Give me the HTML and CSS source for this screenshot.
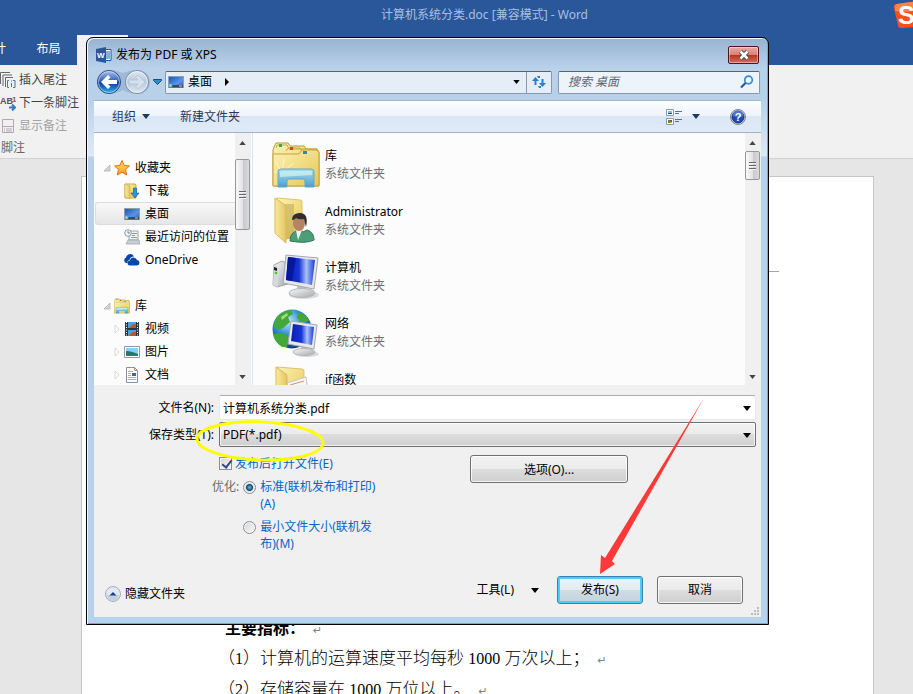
FILE: index.html
```html
<!DOCTYPE html>
<html lang="zh-CN">
<head>
    <meta charset="UTF-8">
    <meta name="viewport" content="width=device-width, initial-scale=1.0">
    <title>计算机系统分类.doc - Word</title>
    <link rel="stylesheet" href="styles.css">
</head>
<body>

    <!-- shared icons -->
    <svg class="defs" width="0" height="0" aria-hidden="true">
        <defs>
            <linearGradient id="gFolder" x1="0" y1="0" x2="1" y2="1">
                <stop offset="0" stop-color="#fdf3b4"/><stop offset="1" stop-color="#e6c653"/>
            </linearGradient>
            <linearGradient id="gFlap" x1="0" y1="0" x2="1" y2="0">
                <stop offset="0" stop-color="#fbeb9c"/><stop offset="1" stop-color="#e3c566"/>
            </linearGradient>
            <linearGradient id="gStand" x1="0" y1="0" x2="0" y2="1">
                <stop offset="0" stop-color="#a5dff0"/><stop offset="1" stop-color="#3f9bd6"/>
            </linearGradient>
            <linearGradient id="gScreen" x1="0" y1="0" x2="1" y2="0">
                <stop offset="0" stop-color="#0a1fb4"/><stop offset=".45" stop-color="#1533d6"/>
                <stop offset=".7" stop-color="#a9c1fa"/><stop offset="1" stop-color="#1b3cd2"/>
            </linearGradient>
            <linearGradient id="gMetal" x1="0" y1="0" x2="1" y2="1">
                <stop offset="0" stop-color="#fafafa"/><stop offset="1" stop-color="#a5a8ab"/>
            </linearGradient>
            <radialGradient id="gGlobe" cx=".4" cy=".3" r=".7">
                <stop offset="0" stop-color="#bfe8fb"/><stop offset=".5" stop-color="#2f8fd0"/><stop offset="1" stop-color="#0b3f83"/>
            </radialGradient>
            <linearGradient id="gBack" x1="0" y1="0" x2="0" y2="1">
                <stop offset="0" stop-color="#a9c4ec"/><stop offset=".48" stop-color="#2b5db8"/>
                <stop offset=".5" stop-color="#0c3292"/><stop offset="1" stop-color="#2fb6ee"/>
            </linearGradient>
            <linearGradient id="gForward" x1="0" y1="0" x2="0" y2="1">
                <stop offset="0" stop-color="#dfe8f1"/><stop offset=".5" stop-color="#b9cada"/><stop offset="1" stop-color="#dce8f3"/>
            </linearGradient>
            <linearGradient id="gStar" x1="0" y1="0" x2="0" y2="1">
                <stop offset="0" stop-color="#ffe36a"/><stop offset="1" stop-color="#f79a1e"/>
            </linearGradient>
            <linearGradient id="gDesk" x1="0" y1="0" x2="1" y2="1">
                <stop offset="0" stop-color="#1b4fae"/><stop offset=".6" stop-color="#5b95e2"/><stop offset="1" stop-color="#2459b5"/>
            </linearGradient>
        </defs>
        <symbol id="caret" viewBox="0 0 8 5"><path d="M0 0h8L4 5z" fill="currentColor"/></symbol>
        <symbol id="caret-up" viewBox="0 0 8 5"><path d="M0 5h8L4 0z" fill="currentColor"/></symbol>
        <symbol id="opened" viewBox="0 0 8 8"><path d="M7 1v6H1z" fill="#d5d5d5" stroke="#a9a9a9" stroke-width=".7"/></symbol>
        <symbol id="closed" viewBox="0 0 8 8"><path d="M2 0l4 4-4 4z" fill="#fff" stroke="#cfcfcf" stroke-width=".8"/></symbol>
        <symbol id="desktop" viewBox="0 0 16 14">
            <rect x=".5" y="1.5" width="15" height="11" fill="url(#gDesk)" stroke="#8fa0b5"/>
            <rect x="1" y="10" width="14" height="2.500" fill="#3a4754"/>
            <circle cx="2.500" cy="10.500" r="2" fill="#3fb6ea"/><circle cx="2.500" cy="10.500" r=".9" fill="#ffd640"/>
            <path d="M11 11h3" stroke="#c9d3dd"/>
        </symbol>
        <symbol id="library" viewBox="0 0 48 48">
            <path d="M2 6l2-4h12l2 3h14l2 3h11l2 3v34H1V9z" fill="url(#gFolder)" stroke="#b99635"/>
            <path d="M4 7l1-3h10l2 4h28v3M14 10l2-3h12l2 4" fill="none" stroke="#c9a947"/>
            <path d="M1 13h26l3-4h15l2 3v33H1z" fill="url(#gFolder)" stroke="#c4a342"/>
            <rect x="7" y="3" width="3" height="3" fill="#35a853"/><rect x="18" y="6" width="3" height="3" fill="#df4125"/><rect x="31" y="10" width="4" height="3" fill="#2f80d0"/>
            <path d="M10 31L3 20M10 31L2 31M10 31L12 18M10 31L22 22" stroke="#fff" stroke-opacity=".6"/>
            <path d="M6 46V31q0-3 3-3h30q3 0 3 3v15h-9v-6q0-2-2-2H17q-2 0-2 2v6z" fill="url(#gStand)" fill-opacity=".92" stroke="#5aa9d3"/>
            <path d="M8 36V31q0-1 2-1h28q2 0 2 1v3z" fill="#d2f3f7" fill-opacity=".7"/>
        </symbol>
    </svg>

    <header class="titlebar">
        <h1 class="doc-title">计算机系统分类.doc [兼容模式] - Word</h1>
        <nav class="tabs">
            <a class="tab" href="#">设计</a>
            <a class="tab" href="#">布局</a>
            <a class="tab active" href="#" aria-label="引用"></a>
        </nav>
        <svg class="ime" viewBox="0 0 28 28" aria-hidden="true">
            <path d="M1 7q-1-3 2-4L25 0q3 0 3 3v20q0 3-3 3l-17 1q-3 0-3-3z" fill="#fb4f1b"/>
            <path d="M2 7q-1-3 2-4L25 0v9Q12 12 2 10z" fill="#ff8246"/>
            <text x="5" y="23" class="ime-letter">S</text>
        </svg>
    </header>

    <section class="ribbon">
        <button class="ribbon-item" type="button">
            <svg width="16" height="16" viewBox="0 0 16 16" fill="none" stroke="#666">
                <path d="M.5 12V.5H10M3 14V3h9M5.500 15V5.500H13"/>
                <path d="M9 8.500H7.500v7H9M13 8.500h2v7h-2M11.500 11v4M11.500 8.500v1" stroke="#3b7abf"/>
            </svg>
            插入尾注
        </button>
        <button class="ribbon-item" type="button">
            <svg width="16" height="16" viewBox="0 0 16 16">
                <text x="0" y="9" class="ab">AB</text><text x="12" y="7" class="ab-one">1</text>
                <path d="M9 12.500h6M12 9.500l3 3-3 3" fill="none" stroke="#3b7abf" stroke-width="2"/>
            </svg>
            下一条脚注
        </button>
        <button class="ribbon-item" type="button" disabled>
            <svg width="16" height="16" viewBox="0 0 16 16" fill="none" stroke="#b1a9b4">
                <path d="M2.500 1.500h11v13h-11zM2.500 8.500h11M4 11h1M6 11h6M4 13h1M6 13h6"/>
            </svg>
            显示备注
        </button>
        <p class="ribbon-group">脚注</p>
    </section>

    <main class="workspace">
        <article class="page">
            <hr class="page-rule">
            <div class="page-text">
                <h2>主要指标：<span class="mark">↵</span></h2>
                <p>（<span class="num">1</span>）计算机的运算速度平均每秒 <span class="num">1000</span> 万次以上；<span class="mark">↵</span></p>
                <p>（<span class="num">2</span>）存储容量在 <span class="num">1000</span> 万位以上。<span class="mark">↵</span></p>
            </div>
        </article>
    </main>

    <section class="dialog" role="dialog" aria-labelledby="dialogTitle">
        <div class="dialog-title">
            <svg width="16" height="16" viewBox="0 0 16 16">
                <path d="M8 2.500h7v11H8z" fill="#fff" stroke="#2b579a"/>
                <path d="M10 5h4M10 7h4M10 9h4M10 11h4" stroke="#2b579a"/>
                <path d="M0 2l10-2v16L0 14z" fill="#2b579a"/>
                <text x="1" y="11" class="word-letter">W</text>
            </svg>
            <span id="dialogTitle">发布为 PDF 或 XPS</span>
            <button class="close" type="button" aria-label="关闭">
                <svg width="12" height="10" viewBox="0 0 12 10">
                    <path d="M2.500 1.500l7 7M9.500 1.500l-7 7" stroke="#4e4a58" stroke-width="4.500"/>
                    <path d="M2.500 1.500l7 7M9.500 1.500l-7 7" stroke="#fff" stroke-width="2.500"/>
                </svg>
            </button>
        </div>

        <div class="nav-row">
            <svg class="nav-arrows" width="56" height="26" viewBox="0 0 56 26" role="img" aria-label="后退 前进">
                <path d="M13 1q7 0 14 3 7-3 15-3a12 12 0 0 1 0 24q-8 0-15-4-7 4-14 4a12 12 0 0 1 0-24z" fill="#8da9c8" fill-opacity=".6"/>
                <circle cx="13" cy="13" r="11.500" fill="url(#gBack)" stroke="#344f80"/>
                <circle cx="13" cy="13" r="10.500" fill="none" stroke="#dbe8fa" stroke-opacity=".6"/>
                <path d="M5 13l7-7 2.500 2.500L12 11h9v4h-9l2.500 2.500L12 20z" fill="#fff"/>
                <circle cx="41" cy="13" r="11.500" fill="url(#gForward)" stroke="#758ca6"/>
                <circle cx="41" cy="13" r="10.500" fill="none" stroke="#fff" stroke-opacity=".6"/>
                <path d="M49 13l-7-7-2.500 2.500L42 11h-9v4h9l-2.500 2.500L42 20z" fill="#d4e0eb" stroke="#a8bacd" stroke-width=".6"/>
            </svg>
            <svg class="recent" width="9" height="6" viewBox="0 0 9 6"><path d="M.5.5h8v1l-4 4-4-4z" fill="#2b8fc9" stroke="#1b4b7c"/></svg>
            <div class="address">
                <svg width="16" height="14"><use href="#desktop"/></svg>
                <span>桌面</span>
                <svg class="crumb" width="4" height="8" viewBox="0 0 4 8"><path d="M0 0l4 4-4 4z"/></svg>
                <svg class="address-caret" width="7" height="4"><use href="#caret"/></svg>
                <button class="refresh" type="button" aria-label="刷新">
                    <svg width="14" height="14" viewBox="0 0 14 14" fill="#2a7fc9">
                        <path d="M0 6l3.500-4L7 6H4.500v4h-2V6z"/><path d="M5 1h3v2H6z"/>
                        <path d="M7 8h2.500V4h2v4H14l-3.500 4z"/><path d="M6 11h3v2H7z"/>
                    </svg>
                </button>
            </div>
            <div class="search">
                <input type="search" placeholder="搜索 桌面" aria-label="搜索 桌面">
                <svg width="14" height="14" viewBox="0 0 14 14" fill="none">
                    <circle cx="8.500" cy="5" r="3.800" stroke="#3a8bd0" stroke-width="1.700"/>
                    <path d="M5.500 8L1 12.500" stroke="#2559a5" stroke-width="2.200"/>
                </svg>
            </div>
        </div>

        <div class="toolbar">
            <button type="button">组织 <svg width="8" height="5"><use href="#caret"/></svg></button>
            <button type="button">新建文件夹</button>
            <button class="view" type="button" aria-label="更改视图">
                <svg width="16" height="16" viewBox="0 0 16 16">
                    <path d="M.5.5h7v6h-7zM.5 9.500h7v6h-7z" fill="#fff" stroke="#8e9aa8"/>
                    <path d="M2 2h4v3H2z" fill="#79bfe4"/><path d="M2 4h4v1H2z" fill="#174f63"/>
                    <path d="M2 11h2v3H2z" fill="#32a43c"/><path d="M4 11h2v2H4z" fill="#c32d69"/><path d="M4 13h2v1H4z" fill="#dfa622"/>
                    <path d="M9 2.500h7M9 4.500h4M9 10.500h7M9 12.500h4" stroke="#5b7188"/>
                </svg>
                <svg width="8" height="5"><use href="#caret"/></svg>
            </button>
            <button class="help" type="button" aria-label="帮助">
                <svg width="16" height="16" viewBox="0 0 16 16">
                    <circle cx="8" cy="8" r="7.500" fill="#d9dce2" stroke="#7a828f"/>
                    <circle cx="8" cy="8" r="6" fill="#2149b8" stroke="#183080"/>
                    <path d="M2.500 7a5.500 5.500 0 0 1 11 0q-5 2-11 0z" fill="#6d92e0" fill-opacity=".6"/>
                    <text x="8" y="12" text-anchor="middle" class="help-mark">?</text>
                </svg>
            </button>
        </div>

        <div class="browser">
            <ul class="tree">
                <li class="group">
                    <svg class="twisty" width="8" height="8"><use href="#opened"/></svg>
                    <svg width="16" height="16" viewBox="0 0 16 16"><path d="M8 .5l2.200 4.900 5.300.6-4 3.500 1.200 5.500L8 12.200 3.300 15l1.200-5.500-4-3.500 5.300-.6z" fill="url(#gStar)" stroke="#d9701a"/></svg>
                    收藏夹
                </li>
                <li>
                    <svg width="16" height="16" viewBox="0 0 16 16">
                        <path d="M1 1h10l1 1v13H1z" fill="url(#gFolder)" stroke="#cda83c"/><path d="M1 1l5 2v13l-5-2z" fill="url(#gFlap)" stroke="#cda83c" stroke-width=".6"/>
                        <path d="M9.500 5h3v5H15l-4 5-4-5h2.500z" fill="#2b96dc" stroke="#1467a9" stroke-width=".7"/>
                    </svg>
                    下载
                </li>
                <li class="selected"><svg width="16" height="14"><use href="#desktop"/></svg>桌面</li>
                <li>
                    <svg width="16" height="16" viewBox="0 0 16 16">
                        <path d="M5 2h9v9H5z" fill="#eef2f6" stroke="#9ba5ae"/><path d="M4 11h11l1 4H2z" fill="#c9ced3" stroke="#969fa8" stroke-width=".7"/>
                        <path d="M8 4.500h5M8 6.500h3M7 8.500h6" stroke="#6ea6d2"/><circle cx="4" cy="4" r="3.300" fill="#f6f8fa" stroke="#8e99a4"/><path d="M4 2v2h2" fill="none" stroke="#5e6973" stroke-width=".8"/>
                    </svg>
                    最近访问的位置
                </li>
                <li>
                    <svg width="16" height="16" viewBox="0 0 16 16">
                        <path d="M2 11a3 3 0 0 1 0-5.500Q3 2 6.500 2 9 2 10 4.500 6 4.500 5.500 8 3 8.500 3.500 11z" fill="#0a48a8"/>
                        <path d="M6 13.500a2.500 2.500 0 0 1 0-5Q6.500 5.500 9.500 5.500q2.500 0 3.500 2.500 2.500.3 2.500 2.800T13 13.500z" fill="#0a48a8"/>
                    </svg>
                    OneDrive
                </li>
                <li class="group spaced">
                    <svg class="twisty" width="8" height="8"><use href="#opened"/></svg>
                    <svg width="16" height="16"><use href="#library"/></svg>
                    库
                </li>
                <li>
                    <svg class="twisty" width="8" height="8"><use href="#closed"/></svg>
                    <svg width="16" height="16" viewBox="0 0 16 16">
                        <path d="M1 1h14v14H1z" fill="#27383e"/><path d="M4 1h8v6H4zM4 9h8v6H4z" fill="#4f9fd8"/><path d="M6 7q1-4 6-4v4zM5 15q3-5 7-4v4z" fill="#b65638"/>
                        <path d="M2.500 1v14M13.500 1v14" stroke="#fff" stroke-dasharray="1 1.500"/>
                    </svg>
                    视频
                </li>
                <li>
                    <svg class="twisty" width="8" height="8"><use href="#closed"/></svg>
                    <svg width="16" height="16" viewBox="0 0 16 16">
                        <path d="M.5 2.500h15v11H.5z" fill="#fff" stroke="#93999e"/><path d="M2 4h12v8H2z" fill="#86d0f1"/><path d="M2 7q5 0 12 3v2H2z" fill="#1f785e"/><path d="M2 10.500h12V12H2z" fill="#2577a8"/>
                    </svg>
                    图片
                </li>
                <li>
                    <svg class="twisty" width="8" height="8"><use href="#closed"/></svg>
                    <svg width="16" height="16" viewBox="0 0 16 16">
                        <path d="M2.500.5h8l3 3v12h-11z" fill="#fff" stroke="#8b9196"/><path d="M10.500.5v3h3" fill="none" stroke="#8b9196"/>
                        <path d="M4 4.500h5M4 6.500h3M4 8.500h3M4 10.500h8M4 12.500h8" stroke="#9fb0be"/><path d="M8 6h4v3H8z" fill="#2b6cb5"/>
                    </svg>
                    文档
                </li>
            </ul>
            <div class="scroll tree-scroll">
                <svg width="7" height="4"><use href="#caret-up"/></svg>
                <span class="thumb"></span>
                <svg width="7" height="4"><use href="#caret"/></svg>
            </div>

            <ul class="files">
                <li>
                    <svg width="48" height="48"><use href="#library"/></svg>
                    <div><b>库</b><small>系统文件夹</small></div>
                </li>
                <li>
                    <svg width="48" height="48" viewBox="0 0 48 48">
                        <path d="M22 44l22-1-8-6z" fill="#ccc" fill-opacity=".6"/>
                        <path d="M5 1l23 2q2 0 2 2v34l-16 3z" fill="url(#gFolder)" stroke="#ddc270"/>
                        <path d="M13 7h9v35h-9z" fill="#bda75a" fill-opacity=".55"/>
                        <path d="M3 1l10 7q1 1 1 3v35L5 38q-2-1-2-3z" fill="url(#gFlap)" stroke="#d9b951"/>
                        <path d="M18 44q0-9 9-11l4 2 4-2q7 2 7 10-8 4-24 1z" fill="#4d9d78" stroke="#2f7657"/>
                        <path d="M24 33l2 10 4-10z" fill="#f3f5f4"/>
                        <ellipse cx="27" cy="26" rx="6" ry="8" fill="#b78362"/>
                        <path d="M20 23q0-7 8-7 9 0 6 14l-2-8q-5 1-8-1-1 2-4 2z" fill="#302e2e"/>
                    </svg>
                    <div><b>Administrator</b><small>系统文件夹</small></div>
                </li>
                <li>
                    <svg width="48" height="48" viewBox="0 0 48 48">
                        <ellipse cx="32" cy="42" rx="15" ry="4" fill="#b9b9b9" fill-opacity=".5"/>
                        <path d="M2 12l8-4 6 3v20L5 34l-4-2z" fill="url(#gMetal)" stroke="#a1a4a6"/>
                        <path d="M2 12l4 2v20l-5-2z" fill="#d7d9da"/><path d="M2 14l3 1v3l-3-1z" fill="#222"/><circle cx="4" cy="20" r="1.300" fill="#39d32c"/>
                        <path d="M25 33h9l1 6h-9z" fill="#bfc2c5"/>
                        <ellipse cx="30" cy="40" rx="13" ry="4.500" fill="url(#gMetal)" stroke="#b5b7b9"/>
                        <path d="M14 2l32 3-4 31-31-6z" fill="#e6e8ea" stroke="#a4a8ad"/>
                        <path d="M16 4l27 3-3 25-26-5z" fill="url(#gScreen)"/>
                        <path d="M24 5l-4 23-6-1 2-23z" fill="#0718a0"/>
                    </svg>
                    <div><b>计算机</b><small>系统文件夹</small></div>
                </li>
                <li>
                    <svg width="48" height="48" viewBox="0 0 48 48">
                        <circle cx="20" cy="20" r="19.500" fill="url(#gGlobe)"/>
                        <path d="M5 8Q12 1 19 1l2 4-5 3 2 5-7 6-5 2-4-3q0-6 3-10zM26 3q8 2 11 9l-7 2-5-5zM1 25l9-1 8 5-3 9-5 0Q2 33 1 25z" fill="#43a838"/>
                        <path d="M9 8l6-4 1 2-6 5z" fill="#a1df72"/>
                        <ellipse cx="35" cy="45" rx="12" ry="3" fill="#b5b5b5" fill-opacity=".5"/>
                        <path d="M29 37h7l1 6h-8z" fill="#bfc2c5"/>
                        <ellipse cx="32" cy="43" rx="11" ry="3.500" fill="url(#gMetal)" stroke="#b5b7b9"/>
                        <path d="M19 12l26 4-3 24-26-5z" fill="#e6e8ea" stroke="#a4a8ad"/>
                        <path d="M21 15l21 3-2 18-21-4z" fill="url(#gScreen)"/>
                    </svg>
                    <div><b>网络</b><small>系统文件夹</small></div>
                </li>
                <li>
                    <svg width="48" height="48" viewBox="0 0 48 48">
                        <path d="M5 2l25 2q2 0 2 2v34l-18 3z" fill="url(#gFolder)" stroke="#ddc270"/>
                        <path d="M15 18l19-6 4 28H15z" fill="#f7f7f7" stroke="#c5c5c5"/>
                        <path d="M18 20l14-4M18 24l15-3" stroke="#d68f78"/>
                        <path d="M4 2l10 7q1 1 1 3v34L6 38q-2-1-2-3z" fill="url(#gFlap)" stroke="#d9b951"/>
                    </svg>
                    <div><b>if函数</b><small>文件夹</small></div>
                </li>
            </ul>
            <div class="scroll files-scroll">
                <svg width="7" height="4"><use href="#caret-up"/></svg>
                <span class="thumb"></span>
                <svg width="7" height="4"><use href="#caret"/></svg>
            </div>
        </div>

        <form class="save-form">
            <div class="fields">
                <label for="fileName">文件名(N):</label>
                <div class="combo">
                    <input type="text" id="fileName" value="计算机系统分类.pdf">
                    <svg width="8" height="5"><use href="#caret"/></svg>
                </div>
                <label for="fileType">保存类型(T):</label>
                <div class="combo">
                    <select id="fileType">
                        <option>PDF(*.pdf)</option>
                        <option>XPS 文档(*.xps)</option>
                    </select>
                    <svg width="8" height="5"><use href="#caret"/></svg>
                </div>
            </div>

            <div class="options">
                <div class="options-left">
                    <label class="check"><input type="checkbox" checked>发布后打开文件(E)</label>
                    <div class="optimize" role="radiogroup" aria-labelledby="optimizeLabel">
                        <span id="optimizeLabel">优化:</span>
                        <div class="radios">
                            <label><input type="radio" name="optimize" checked><span>标准(联机发布和打印)(A)</span></label>
                            <label><input type="radio" name="optimize"><span>最小文件大小(联机发布)(M)</span></label>
                        </div>
                    </div>
                </div>
                <button class="btn btn-wide" type="button">选项(O)...</button>
            </div>

            <div class="actions">
                <button class="plain hide-folders" type="button">
                    <svg width="16" height="16" viewBox="0 0 16 16">
                        <circle cx="8" cy="8" r="7.500" fill="#e2e8f0" stroke="#a2adc4"/><path d="M2 9h12a6 6 0 0 1-12 0z" fill="#c5d0dc"/>
                        <path d="M4.500 9.500L8 6l3.500 3.500z" fill="#1d3c91"/>
                    </svg>
                    隐藏文件夹
                </button>
                <button class="plain tools" type="button">工具(L) <svg width="8" height="5"><use href="#caret"/></svg></button>
                <button class="btn btn-default" type="submit">发布(S)</button>
                <button class="btn" type="button">取消</button>
            </div>
            <svg class="grip" width="9" height="9" viewBox="0 0 9 9"><path d="M7 0h2v2H7zM7 3h2v2H7zM7 6h2v2H7zM4 3h2v2H4zM4 6h2v2H4zM1 6h2v2H1z" fill="#bdbdbd"/></svg>
        </form>
    </section>

    <!-- pen marks -->
    <svg class="marks" width="913" height="694" viewBox="0 0 913 694" aria-hidden="true">
        <ellipse cx="260" cy="441" rx="63" ry="19" fill="none" stroke="#ff0" stroke-width="3" transform="rotate(2 260 441)"/>
        <path d="M704 398L605 558l-4-3-1 19 15-10-3-3z" fill="#fd3a37"/>
    </svg>

</body>
</html>
```
FILE: styles.css
```css
* {
    box-sizing: border-box;
}
body {
    margin: 0;
    height: 100vh;
    display: flex;
    flex-direction: column;
    position: relative;
    overflow: hidden;
    background-color: #e6e6e6;
    font-family: "Noto Sans", "Noto Sans CJK SC", sans-serif;
    font-size: 12px;
    line-height: 18px;
    color: #000;
}
button, input, select {
    font: inherit;
    color: inherit;
    margin: 0;
}
svg {
    display: block;
    flex: none;
}
ul {
    list-style: none;
    margin: 0;
    padding: 0;
}
.defs {
    position: absolute;
}

/* word window */
.titlebar {
    flex: none;
    display: flex;
    flex-direction: column;
    justify-content: space-between;
    height: 65px;
    background-color: #2a579a;
    position: relative;
}
.doc-title {
    margin: 0;
    padding: 6px 0 0 56px;
    text-align: center;
    font-size: 12px;
    font-weight: normal;
    color: #a9bfe0;
}
.tabs {
    display: flex;
    margin-left: -32px;
}
.tab {
    width: 57px;
    height: 30px;
    padding-top: 5px;
    text-align: center;
    color: #fff;
    text-decoration: none;
}
.tab:first-child {
    width: 52px;
}
.tab.active {
    width: 51px;
    background-color: #f1f1f1;
}
.ime {
    position: absolute;
    right: -8px;
    top: 1px;
    width: 28px;
    height: 28px;
}
.ime-letter {
    font: bold 25px "Liberation Sans", sans-serif;
    fill: #fff;
}
.ribbon {
    flex: none;
    display: flex;
    flex-direction: column;
    align-items: flex-start;
    padding-top: 3px;
    height: 94px;
    background-color: #f1f1f1;
    border-bottom: 1px solid #d2d2d2;
    color: #444;
}
.ribbon-item {
    flex: none;
    display: flex;
    align-items: center;
    gap: 3px;
    height: 23px;
    padding: 1px 0 0;
    border: none;
    background: none;
    white-space: nowrap;
}
.ribbon-item:disabled {
    color: #a3a3a3;
}
.ribbon-group {
    margin: 2px 1px 0;
    color: #666;
}
.ab {
    font: bold 9px "Liberation Sans", sans-serif;
    fill: #555;
}
.ab-one {
    font: bold 8px "Liberation Sans", sans-serif;
    fill: #d2421d;
}
.workspace {
    flex: 1;
    display: flex;
    padding: 17px 39px 0 81px;
    min-height: 0;
}
.page {
    flex: 1;
    padding: 94px 94px 0 136px;
    background-color: #fff;
    border: 1px solid #c6c6c6;
    border-bottom: none;
}
.page-rule {
    margin: 0;
    border: none;
    border-top: 1px solid #a5a5a5;
}
.page-text {
    padding-top: 341px;
    font-family: "Liberation Serif", "Noto Sans CJK SC", serif;
    font-size: 17px;
    font-weight: 300;
    line-height: 31px;
    white-space: nowrap;
}
.page-text h2 {
    margin: 0;
    padding-left: 7px;
    height: 31px;
    font-size: 16px;
    line-height: 31px;
}
.page-text p {
    margin: 0;
    height: 31px;
    line-height: 30px;
}
.num {
    font-size: 16px;
    line-height: 1;
}
.mark {
    margin-left: 8px;
    font-family: "DejaVu Sans", sans-serif;
    font-size: 11px;
    line-height: 1;
    font-weight: normal;
    color: #808080;
}

/* dialog */
.dialog {
    position: absolute;
    left: 86px;
    right: 144px;
    top: 37px;
    padding: 0 7px 7px;
    border: 1px solid #000;
    border-radius: 7px 7px 0 0;
    background: linear-gradient(#97b3d1 0, #bad1ea 30px, #b9d0e9 62px, #dfe9f5 118px, #b9d1ea 119px);
    box-shadow: inset 1px 1px 0 #f2f8fd, inset -1px -1px 0 #33c5de;
}
.dialog-title {
    display: flex;
    align-items: center;
    gap: 4px;
    height: 32px;
    padding: 1px 2px 0;
}
.close {
    display: flex;
    align-items: center;
    justify-content: center;
    width: 31px;
    height: 18px;
    margin-left: auto;
    padding: 0;
    border: 1px solid #4e1420;
    border-radius: 2px;
    background: linear-gradient(#e8aba2, #d98177 48%, #b9321d 50%, #d0705f);
    box-shadow: inset 0 0 0 1px rgba(255, 255, 255, .4);
}
.word-letter {
    font: bold 8px "Liberation Sans", sans-serif;
    fill: #fff;
}
.nav-row {
    display: flex;
    align-items: center;
    height: 24px;
    margin-bottom: 6px;
    padding: 0 1px 0 2px;
}
.recent {
    margin: 0 3px 0 1px;
}
.address, .search {
    display: flex;
    align-items: center;
    height: 23px;
    border: 1px solid #8598ae;
    border-top-color: #59636f;
    border-radius: 2px;
    background-color: #edf3fb;
}
.address {
    flex: 1;
    gap: 4px;
    padding-left: 2px;
    background-color: #e5edf7;
}
.crumb {
    margin-left: 9px;
}
.address-caret {
    margin-left: auto;
    margin-right: 2px;
}
.refresh {
    display: flex;
    align-items: center;
    justify-content: center;
    width: 25px;
    height: 21px;
    padding: 0;
    border: none;
    border-left: 1px solid #8598ae;
    background: none;
}
.search {
    flex: 0 0 202px;
    min-width: 0;
    margin-left: 6px;
    padding: 0 5px 0 9px;
}
.search input {
    flex: 1;
    min-width: 0;
    padding: 0;
    border: none;
    outline: none;
    background: none;
    font-style: italic;
}
.search input::placeholder {
    color: #5f6770;
}
.toolbar {
    display: flex;
    align-items: center;
    height: 33px;
    padding: 0 15px 0 18px;
    border-top: 1px solid #9db5d2;
    border-bottom: 1px solid #9fb3d0;
    background: linear-gradient(#fdfeff, #ecf3fb 49%, #dce7f5 50%, #dfeaf7);
    color: #1e395b;
}
.toolbar button {
    display: flex;
    align-items: center;
    gap: 6px;
    margin-right: 30px;
    padding: 0;
    border: none;
    background: none;
}
.toolbar .view {
    gap: 10px;
    margin-left: auto;
}
.toolbar .help {
    margin-right: 0;
}
.help-mark {
    font: bold 11px "Liberation Sans", sans-serif;
    fill: #fff;
}
.browser {
    display: flex;
    height: 252px;
    overflow: hidden;
    background-color: #fcfcfc;
}
.tree {
    flex: none;
    width: 141px;
    padding: 23px 0 0 1px;
}
.tree li {
    display: flex;
    align-items: center;
    gap: 5px;
    height: 23px;
    padding-left: 29px;
    white-space: nowrap;
}
.tree .twisty {
    margin-left: -11px;
    margin-right: -2px;
}
.tree .group {
    padding-left: 19px;
}
.tree .spaced {
    margin-top: 23px;
}
.tree .selected {
    padding-left: 28px;
    border: 1px solid #dcdcdc;
    border-right: none;
    border-radius: 3px 0 0 3px;
    background: linear-gradient(#f9f9f9, #e6e6e6);
}
.scroll {
    flex: none;
    display: flex;
    flex-direction: column;
    align-items: center;
    width: 16px;
    padding: 8px 1px 6px 0;
    background-color: #f0f0f0;
    color: #444;
}
.tree-scroll {
    margin-right: 1px;
}
.scroll svg:last-child {
    margin-top: auto;
}
.thumb {
    display: flex;
    width: 15px;
    height: 29px;
    margin-top: 6px;
    border: 1px solid #979797;
    border-radius: 2px;
    background: linear-gradient(90deg, #f8f8f8, #e4e4e6 50%, #c8c9cd 55%, #dadadd);
}
.thumb::after {
    content: "";
    width: 7px;
    height: 8px;
    margin: auto;
    background: repeating-linear-gradient(#666 0 1px, #f5f5f5 1px 2px, transparent 2px 3px);
}
.tree-scroll .thumb {
    height: 71px;
    margin-top: 14px;
}
.files {
    flex: 1;
    padding: 4px 0 0 19px;
    border-left: 1px solid #d9e4f1;
}
.files li {
    display: flex;
    align-items: center;
    gap: 5px;
    height: 56px;
}
.files b, .files small {
    display: block;
    font-size: 12px;
    font-weight: normal;
}
.files small {
    color: #6d6d6d;
}

/* file name, type and publish options */
.save-form {
    position: relative;
    padding: 10px 5px 13px 0;
    background-color: #f0f0f0;
}
.fields {
    display: grid;
    grid-template-columns: 120px 1fr;
    gap: 2px 5px;
    align-items: center;
}
.fields label {
    text-align: right;
}
.combo {
    position: relative;
}
.combo input, .combo select {
    display: block;
    width: 100%;
    height: 25px;
    padding: 0 20px 0 3px;
    border: 1px solid #e3e9ef;
    border-top-color: #abadb3;
    border-radius: 2px;
    outline: none;
    background-color: #fff;
}
.combo select {
    appearance: none;
    border-color: #707070;
    background: linear-gradient(#f2f2f2, #ebebeb 49%, #dddddd 50%, #cfcfcf);
    box-shadow: inset 0 0 0 1px rgba(255, 255, 255, .7);
}
.combo svg {
    position: absolute;
    right: 5px;
    top: 11px;
    pointer-events: none;
}
.options {
    display: flex;
    align-items: flex-start;
    padding: 8px 0 0 118px;
    line-height: 17px;
}
.options-left {
    width: 258px;
    color: #0066cc;
}
.check {
    display: flex;
    align-items: center;
    gap: 3px;
    margin-left: 7px;
}
.check input, .radios input {
    flex: none;
    appearance: none;
    width: 13px;
    height: 13px;
    border: 1px solid #8e8f8f;
    background: linear-gradient(135deg, #d0d3d7, #fafafa);
    box-shadow: inset 0 0 0 1px #f4f4f4;
}
.check input:checked::after {
    content: "";
    display: block;
    width: 4px;
    height: 8px;
    margin: 0 0 0 4px;
    border: solid #32478e;
    border-width: 0 2px 2px 0;
    transform: rotate(38deg);
}
.optimize {
    display: flex;
    gap: 4px;
    margin-top: 6px;
}
#optimizeLabel {
    color: #6d6d6d;
}
.radios label {
    display: flex;
    gap: 4px;
    width: 138px;
    margin-bottom: 6px;
}
.radios label:last-child {
    margin-bottom: 0;
}
.radios input {
    margin-top: 3px;
    border-radius: 50%;
}
.radios input:checked {
    background: radial-gradient(circle at 50% 50%, #5cc6ee 0, #17476b 3px, #d9dde1 4px);
}
.btn {
    width: 86px;
    height: 28px;
    padding: 0;
    border: 1px solid #707070;
    border-radius: 3px;
    background: linear-gradient(#f2f2f2, #ebebeb 49%, #dddddd 50%, #cfcfcf);
    box-shadow: inset 0 0 0 1px rgba(255, 255, 255, .8);
}
.btn-wide {
    width: 158px;
}
.btn-default {
    border-color: #3c7fb1;
    background: linear-gradient(#eff4f6, #e2ebef 49%, #cfdde4 50%, #c3d3dc);
    box-shadow: inset 0 0 0 2px #48d0f8;
}
.actions {
    display: flex;
    align-items: center;
    gap: 14px;
    margin-top: 24px;
    padding: 0 13px 0 11px;
}
.plain {
    display: flex;
    align-items: center;
    padding: 0;
    border: none;
    background: none;
}
.hide-folders {
    gap: 4px;
    margin: 8px auto 0 0;
}
.tools {
    gap: 17px;
    margin-right: 4px;
}
.grip {
    position: absolute;
    right: 2px;
    bottom: 1px;
}
.marks {
    position: absolute;
    left: 0;
    top: 0;
    pointer-events: none;
}
```
